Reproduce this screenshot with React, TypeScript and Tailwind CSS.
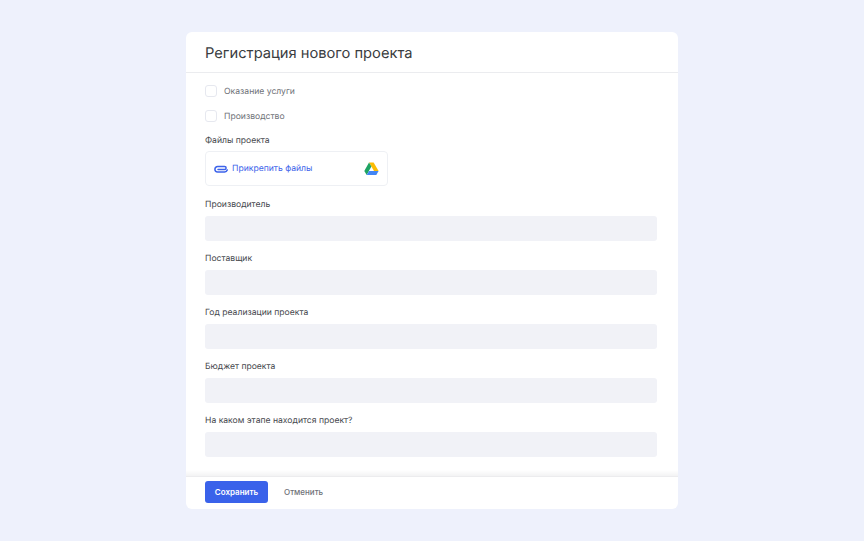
const fields = [
  "Производитель",
  "Поставщик",
  "Год реализации проекта",
  "Бюджет проекта",
  "На каком этапе находится проект?",
];

function CheckRow({ label }: { label: string }) {
  return (
    <label className="flex h-[13px] items-center gap-[7px]">
      <span className="h-[12px] w-[12px] -translate-y-px rounded-[3px] border border-[#e6e8ef] bg-white" />
      <span className="pt-[2px] text-[8.6px] leading-[13px] text-[#6f7278]">{label}</span>
    </label>
  );
}

function DriveIcon() {
  return (
    <svg width="15" height="14" viewBox="0 0 15 14" aria-hidden>
      <path d="M5 0.5h4.6L14.6 9H10z" fill="#fbbc04" />
      <path d="M5 0.5L0.3 9l2.4 4L7.4 4.6z" fill="#1ea362" />
      <path d="M2.7 13h9.6l2.3-4H5z" fill="#4285f4" />
    </svg>
  );
}

function PaperclipIcon() {
  return (
    <svg width="14" height="9" viewBox="0 0 14 9" fill="none" aria-hidden>
      <path
        d="M4 5.6h6.6a1.5 1.5 0 0 0 0-3H3.6a2.6 2.6 0 0 0 0 5.4h7a3.1 3.1 0 0 0 2.7-2"
        stroke="#3d63ea"
        strokeWidth="1.5"
        strokeLinecap="round"
      />
    </svg>
  );
}

export default function App() {
  return (
    <div className="flex h-[541px] w-[864px] items-start justify-center bg-[#eef1fc] pt-8 font-['Inter',sans-serif] [text-rendering:geometricPrecision]">
      <div className="flex h-[477px] w-[492px] flex-col overflow-hidden rounded-[6px] bg-white">
        <header className="flex h-[41px] shrink-0 items-center border-b border-[#ebecef] pl-[19px] pr-[21px] pt-[2px]">
          <h1 className="text-[14.7px] font-normal text-[#3a3c40]">Регистрация нового проекта</h1>
        </header>

        <main className="flex flex-1 flex-col pl-[19px] pr-[21px] pt-3">
          <div className="flex flex-col gap-3">
            <CheckRow label="Оказание услуги" />
            <CheckRow label="Производство" />
          </div>

          <p className="mt-[12px] text-[8.6px] leading-[13px] text-[#46484d]">Файлы проекта</p>
          <div className="mt-[3px] flex h-[35px] w-[183px] items-center justify-between rounded-[4px] border border-[#eef0f4] pl-[8px] pr-[8px]">
            <span className="flex items-center gap-[4px]">
              <PaperclipIcon />
              <span className="pt-[2px] text-[8.6px] text-[#3d63ea]">Прикрепить файлы</span>
            </span>
            <DriveIcon />
          </div>

          <div className="mt-[14px] flex flex-col gap-[13px]">
            {fields.map((f) => (
              <div key={f} className="flex flex-col gap-[6px]">
                <p className="text-[8.6px] leading-[10px] text-[#46484d]">{f}</p>
                <div className="h-[25px] rounded-[3px] bg-[#f1f2f7]" />
              </div>
            ))}
          </div>
        </main>

        <footer className="relative flex h-[33px] shrink-0 items-center gap-4 border-t border-[#ececee] pb-[2px] pl-[19px] pr-[21px]">
          <div className="absolute inset-x-0 -top-[7px] h-[6px] bg-gradient-to-b from-white to-[#f3f3f4]" />
          <button className="h-[22px] w-[63px] rounded-[3px] bg-[#3a62ea] text-[8px] font-semibold text-white">
            Сохранить
          </button>
          <button className="text-[8px] font-medium text-[#6f7278]">Отменить</button>
        </footer>
      </div>
    </div>
  );
}
